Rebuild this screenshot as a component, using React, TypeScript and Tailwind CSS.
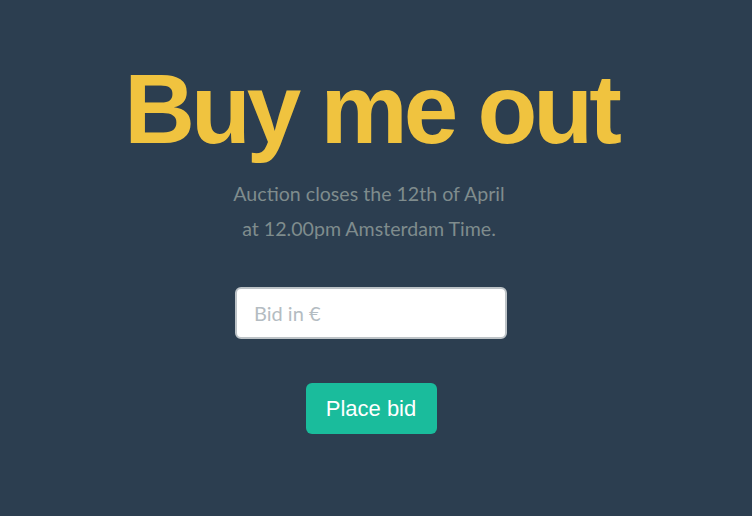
import React from 'react';

export default function App() {
  return (
    <div className="min-h-screen w-full bg-[#2c3e50] flex flex-col items-center pr-[10px]">
      <h1 className="mt-[60px] text-[98px] leading-none font-bold tracking-[-4px] text-[#f0c33f] font-['Liberation_Sans',Arial,sans-serif]">
        Buy me out
      </h1>

      <p className="mt-[18px] pr-[4px] text-center text-[19.6px] leading-[35px] text-[#7f8c8d] font-['Lato',sans-serif]">
        Auction closes the 12th of April
        <br />
        at 12.00pm Amsterdam Time.
      </p>

      <input
        type="text"
        placeholder="Bid in €"
        className="mt-[41px] w-[272px] h-[52px] rounded-md border-2 border-[#bdc3c7] bg-white px-[17px] text-[20px] text-[#34495e] placeholder:text-[#b4bcc2] font-['Lato',sans-serif] outline-none"
      />

      <button className="mt-[44px] w-[131px] h-[51px] rounded-md bg-[#1abc9c] text-white text-[22px] font-['Liberation_Sans',Arial,sans-serif]">
        Place bid
      </button>
    </div>
  );
}
